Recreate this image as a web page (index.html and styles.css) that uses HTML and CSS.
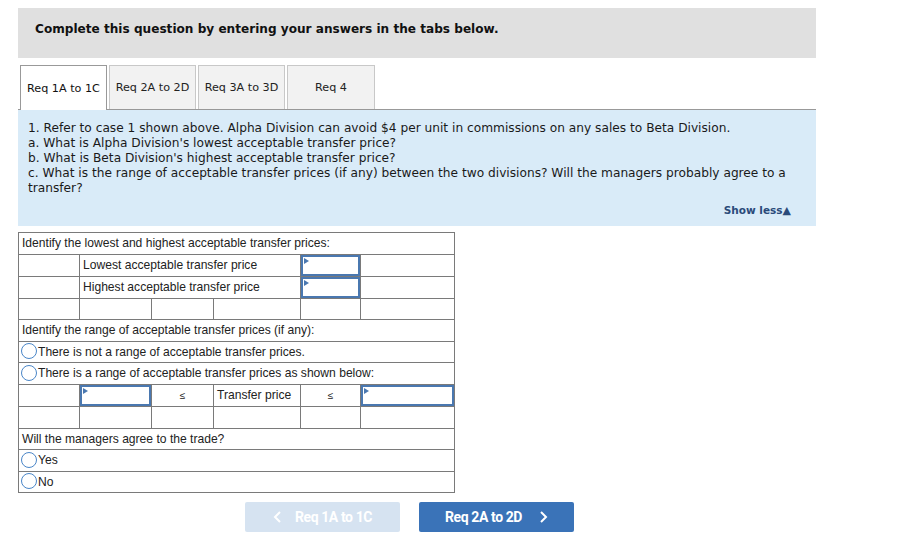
FILE: index.html
```html
<!DOCTYPE html>
<html>
<head>
  <link rel="stylesheet" href="styles.css">
</head>
<body>
  <div class="page">
    <div class="top-bar">Complete this question by entering your answers in the tabs below.</div>

    <div class="tabs">
      <div class="tab active">Req 1A to 1C</div>
      <div class="tab">Req 2A to 2D</div>
      <div class="tab">Req 3A to 3D</div>
      <div class="tab">Req 4</div>
    </div>

    <div class="question">
      <p>1. Refer to case 1 shown above. Alpha Division can avoid $4 per unit in commissions on any sales to Beta Division.</p>
      <p>a. What is Alpha Division's lowest acceptable transfer price?</p>
      <p>b. What is Beta Division's highest acceptable transfer price?</p>
      <p>c. What is the range of acceptable transfer prices (if any) between the two divisions? Will the managers probably agree to a transfer?</p>
      <div class="show-less">Show less<span class="tri">&#9650;</span></div>
    </div>

    <table class="answers">
      <colgroup>
        <col style="width:61px"><col style="width:72px"><col style="width:62px">
        <col style="width:87px"><col style="width:60px"><col style="width:94px">
      </colgroup>
      <tr><td colspan="6">Identify the lowest and highest acceptable transfer prices:</td></tr>
      <tr>
        <td></td>
        <td colspan="3">Lowest acceptable transfer price</td>
        <td class="entry"><div class="box"></div></td>
        <td></td>
      </tr>
      <tr>
        <td></td>
        <td colspan="3">Highest acceptable transfer price</td>
        <td class="entry"><div class="box"></div></td>
        <td></td>
      </tr>
      <tr><td></td><td></td><td></td><td></td><td></td><td></td></tr>
      <tr><td colspan="6">Identify the range of acceptable transfer prices (if any):</td></tr>
      <tr><td colspan="6" class="opt"><span class="radio"></span>There is not a range of acceptable transfer prices.</td></tr>
      <tr><td colspan="6" class="opt"><span class="radio"></span>There is a range of acceptable transfer prices as shown below:</td></tr>
      <tr>
        <td></td>
        <td class="entry"><div class="box"></div></td>
        <td class="center">&le;</td>
        <td>Transfer price</td>
        <td class="center">&le;</td>
        <td class="entry"><div class="box"></div></td>
      </tr>
      <tr><td></td><td></td><td></td><td></td><td></td><td></td></tr>
      <tr><td colspan="6">Will the managers agree to the trade?</td></tr>
      <tr><td colspan="6" class="opt"><span class="radio"></span>Yes</td></tr>
      <tr><td colspan="6" class="opt"><span class="radio"></span>No</td></tr>
    </table>

    <div class="nav">
      <div class="nav-btn prev">
        <svg width="10" height="12" viewBox="0 0 10 12"><path d="M7 1 L2 6 L7 11" fill="none" stroke="#fff" stroke-width="2"/></svg>
        Req 1A to 1C
      </div>
      <div class="nav-btn next">
        Req 2A to 2D
        <svg width="10" height="12" viewBox="0 0 10 12"><path d="M3 1 L8 6 L3 11" fill="none" stroke="#fff" stroke-width="2"/></svg>
      </div>
    </div>
  </div>
</body>
</html>
```

FILE: styles.css
```css
body {
  margin: 0;
  padding: 0;
  background-color: #fff;
  font-family: 'DejaVu Sans', Verdana, sans-serif;
  color: #1a1a1a;
}

.page {
  width: 798px;
  padding: 8px 0 0 18px;
}

.top-bar {
  background-color: #e0e0e0;
  height: 50px;
  line-height: 42px;
  padding-left: 17px;
  font-size: 12.1px;
  font-weight: bold;
  color: #111;
  box-sizing: border-box;
}

.tabs {
  display: flex;
  gap: 2px;
  margin-top: 7px;
  padding-left: 2px;
  border-bottom: 1px solid #999;
  height: 44px;
}

.tab {
  width: 87px;
  height: 44px;
  box-sizing: border-box;
  background-color: #f2f2f2;
  border: 1px solid #c8c8c8;
  border-bottom: none;
  font-size: 11.2px;
  color: #222;
  display: flex;
  align-items: center;
  justify-content: center;
}

.tab:nth-child(4) {
  width: 88px;
}

.tab.active {
  background-color: #fff;
  border-color: #999;
  height: 45px;
  margin-bottom: -1px;
  color: #111;
}

.question {
  background-color: #d9ebf8;
  padding: 11px 25px 9px 10px;
  height: 116px;
  box-sizing: border-box;
  font-size: 12.2px;
  line-height: 15px;
  color: #1a1a1a;
}

.question p {
  margin: 0;
}

.show-less {
  text-align: right;
  font-size: 10.5px;
  font-weight: bold;
  color: #2a4a7a;
  margin-top: 7px;
}

.show-less .tri {
  font-size: 11px;
}

.answers {
  margin-top: 6px;
  border-collapse: collapse;
  table-layout: fixed;
  width: 437px;
  font-family: 'Liberation Sans', Arial, sans-serif;
  font-size: 12.1px;
  color: #222;
}

.answers td {
  border: 1px solid #7a7a7a;
  height: 20.6px;
  padding: 0 0 0 3px;
  white-space: nowrap;
  overflow: hidden;
}

.answers td.center {
  text-align: center;
  padding: 0;
  font-size: 10px;
}

.answers td.entry {
  padding: 0;
}

.box {
  height: 21px;
  border: 2px solid #4a78b0;
  box-sizing: border-box;
  position: relative;
}

.box::before {
  content: "";
  position: absolute;
  top: 1px;
  left: 1px;
  border-left: 5px solid #4a78b0;
  border-top: 3px solid transparent;
  border-bottom: 3px solid transparent;
}

.answers td.opt {
  padding-left: 2px;
}

.radio {
  display: inline-block;
  width: 14px;
  height: 14px;
  border: 1.5px solid #4a86c8;
  border-radius: 50%;
  vertical-align: middle;
  margin-right: 1px;
  margin-top: -2px;
}

.nav {
  display: flex;
  gap: 19px;
  margin-top: 9px;
  padding-left: 227px;
}

.nav-btn {
  width: 155px;
  height: 30px;
  border-radius: 2px;
  display: flex;
  align-items: center;
  justify-content: center;
  gap: 12px;
  font-family: Roboto, 'Liberation Sans', sans-serif;
  font-size: 14px;
  font-weight: bold;
  letter-spacing: -0.4px;
  color: #fff;
}

.nav-btn.prev {
  background-color: #d6e3f1;
}

.nav-btn.next {
  background-color: #3a73b8;
  gap: 16px;
}
```
